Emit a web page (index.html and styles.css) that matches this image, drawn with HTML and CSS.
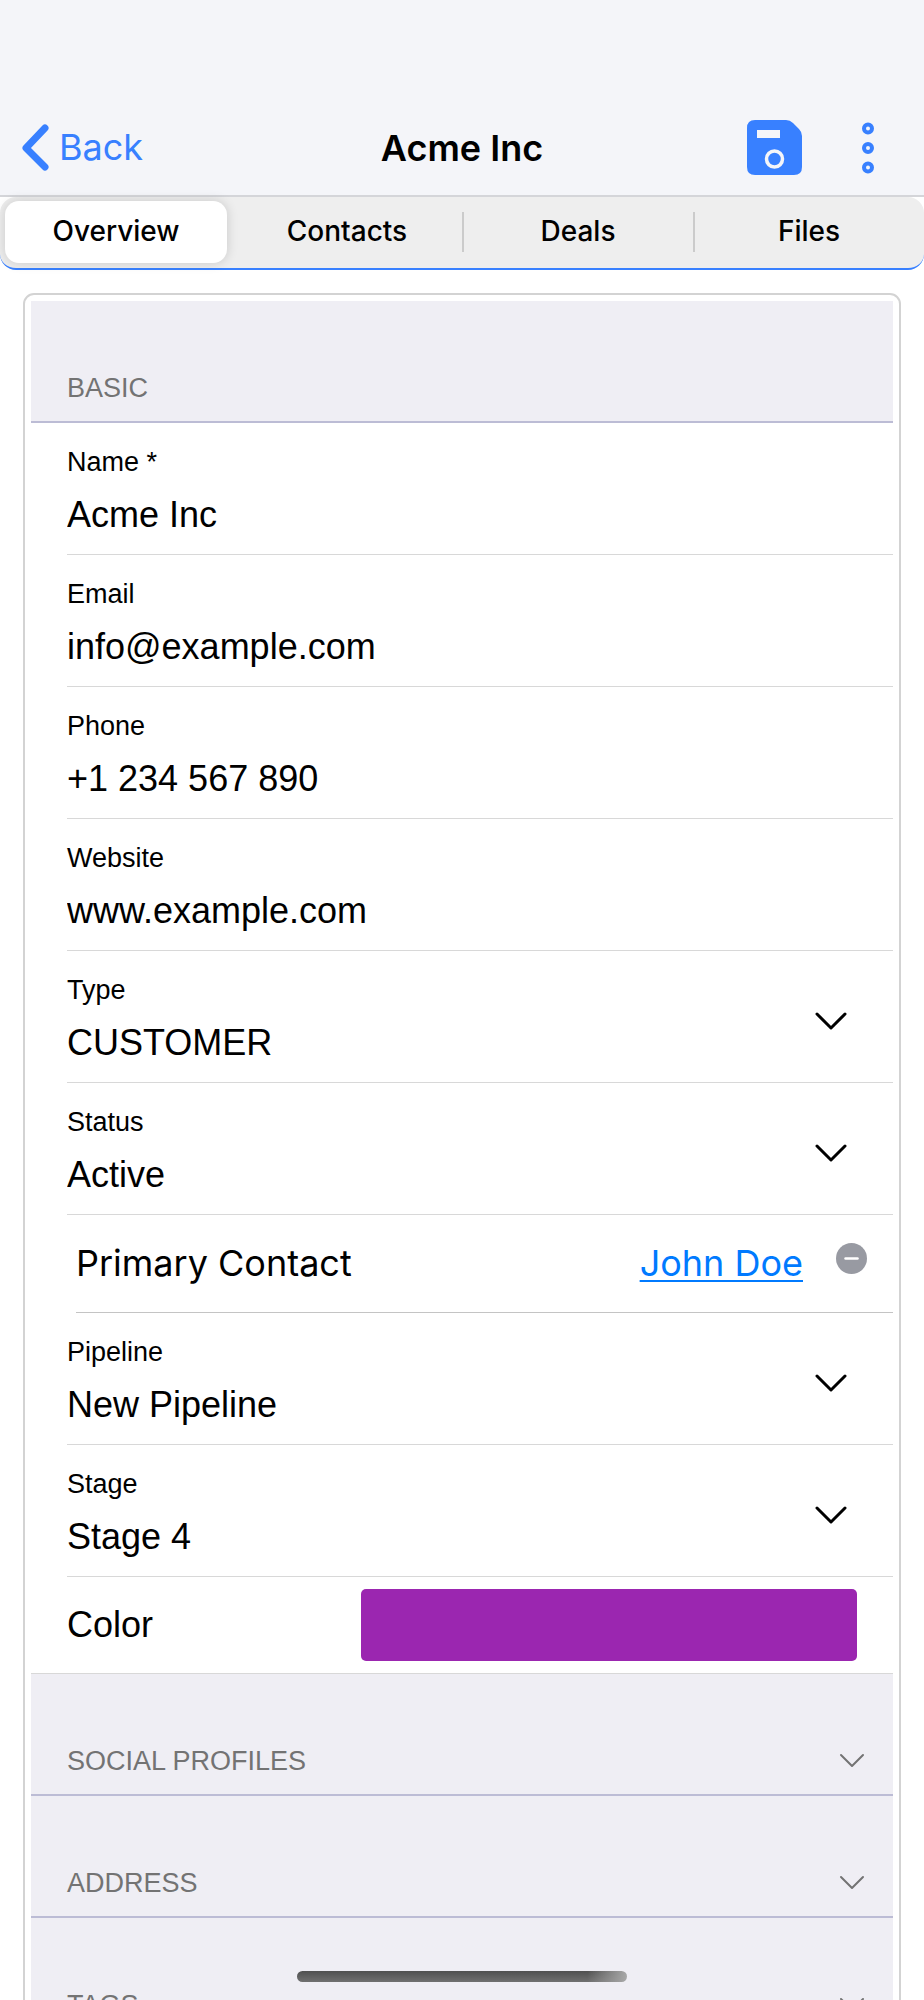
FILE: index.html
```html
<!DOCTYPE html>
<html lang="en">
<head>
  <meta charset="UTF-8" />
  <meta name="viewport" content="width=device-width, initial-scale=1.0"/>
  <title>Acme Inc</title>
  <link rel="stylesheet" href="styles.css">
</head>
<body>
  <header class="header">
    <button class="back" type="button">
      <svg width="28" height="48" viewBox="0 0 28 48"><path d="M23 4 L4 24 L23 43" fill="none" stroke="currentColor" stroke-width="7" stroke-linecap="round" stroke-linejoin="round"/></svg>
      Back
    </button>
    <h1 class="title">Acme Inc</h1>
    <div class="actions">
      <button class="icon-button" type="button" aria-label="Save">
        <svg width="55" height="55" viewBox="0 0 55 55">
          <path fill="currentColor" fill-rule="evenodd" d="M8 0 H39 Q43 0 46 3 L52 9 Q55 12 55 16 V47 Q55 55 47 55 H8 Q0 55 0 47 V8 Q0 0 8 0 Z M10 10 V18 H33 V10 Z"/>
          <circle cx="27.5" cy="39" r="8" fill="none" stroke="#f4f5f9" stroke-width="3.5"/>
        </svg>
      </button>
      <button class="icon-button" type="button" aria-label="More options">
        <svg width="12" height="52" viewBox="0 0 12 52" fill="none" stroke="currentColor" stroke-width="4">
          <circle cx="6" cy="6.5" r="4"/>
          <circle cx="6" cy="26" r="4"/>
          <circle cx="6" cy="45.5" r="4"/>
        </svg>
      </button>
    </div>
  </header>

  <nav class="tabs">
    <button class="tab active" type="button">Overview</button>
    <button class="tab" type="button">Contacts</button>
    <button class="tab divided" type="button">Deals</button>
    <button class="tab divided" type="button">Files</button>
  </nav>

  <main class="content">
    <form class="card">
      <h2 class="section">BASIC</h2>

      <div class="row">
        <div class="field">
          <label for="name">Name *</label>
          <input id="name" type="text" value="Acme Inc">
        </div>
      </div>
      <div class="row">
        <div class="field">
          <label for="email">Email</label>
          <input id="email" type="email" value="info@example.com">
        </div>
      </div>
      <div class="row">
        <div class="field">
          <label for="phone">Phone</label>
          <input id="phone" type="tel" value="+1 234 567 890">
        </div>
      </div>
      <div class="row">
        <div class="field">
          <label for="website">Website</label>
          <input id="website" type="text" value="www.example.com">
        </div>
      </div>
      <div class="row">
        <div class="field">
          <label for="type">Type</label>
          <select id="type"><option>CUSTOMER</option></select>
        </div>
        <svg class="chevron" width="32" height="28" viewBox="0 0 32 28"><path d="M2 9 L16 23 L30 9"/></svg>
      </div>
      <div class="row">
        <div class="field">
          <label for="status">Status</label>
          <select id="status"><option>Active</option></select>
        </div>
        <svg class="chevron" width="32" height="28" viewBox="0 0 32 28"><path d="M2 9 L16 23 L30 9"/></svg>
      </div>

      <div class="contact">
        <span class="contact-label">Primary Contact</span>
        <a href="#contact">John Doe</a>
        <button class="remove" type="button" aria-label="Remove contact">
          <svg width="31" height="31" viewBox="0 0 31 31"><circle cx="15.5" cy="15.5" r="15.5" fill="#989aa2"/><path d="M9.5 15.5 H21.5" stroke="#fff" stroke-width="2.5" stroke-linecap="round"/></svg>
        </button>
      </div>

      <div class="row">
        <div class="field">
          <label for="pipeline">Pipeline</label>
          <select id="pipeline"><option>New Pipeline</option></select>
        </div>
        <svg class="chevron" width="32" height="28" viewBox="0 0 32 28"><path d="M2 9 L16 23 L30 9"/></svg>
      </div>
      <div class="row">
        <div class="field">
          <label for="stage">Stage</label>
          <select id="stage"><option>Stage 4</option></select>
        </div>
        <svg class="chevron" width="32" height="28" viewBox="0 0 32 28"><path d="M2 9 L16 23 L30 9"/></svg>
      </div>
      <div class="color-row">
        <label for="color">Color</label>
        <input id="color" type="color" value="#9b26b0">
      </div>

      <button class="section" type="button">
        SOCIAL PROFILES
        <svg class="chevron small" width="26" height="30" viewBox="0 0 26 30"><path d="M2 8 L13 19 L24 8"/></svg>
      </button>
      <button class="section" type="button">
        ADDRESS
        <svg class="chevron small" width="26" height="30" viewBox="0 0 26 30"><path d="M2 8 L13 19 L24 8"/></svg>
      </button>
      <button class="section" type="button">
        TAGS
        <svg class="chevron small" width="26" height="30" viewBox="0 0 26 30"><path d="M2 8 L13 19 L24 8"/></svg>
      </button>
    </form>
  </main>

  <div class="home-indicator"></div>
</body>
</html>
```

FILE: styles.css
```css
* {
  margin: 0;
  padding: 0;
  box-sizing: border-box;
}

body {
  height: 100vh;
  display: flex;
  flex-direction: column;
  position: relative;
  overflow: hidden;
  background: #fff;
  color: #000;
  font-family: 'Liberation Sans', Arial, sans-serif;
}

button,
input,
select {
  border: none;
  background: none;
  color: inherit;
  font-family: inherit;
  appearance: none;
  outline: none;
}

/* Header */
.header {
  flex-shrink: 0;
  display: grid;
  grid-template-columns: 1fr auto 1fr;
  align-items: center;
  padding: 109px 50px 9px 22px;
  background: #f4f5f9;
  border-bottom: 2px solid #d4d5d9;
  font-family: Inter, sans-serif;
}

.back {
  display: flex;
  align-items: center;
  gap: 9px;
  color: #3880ff;
  font-size: 36px;
  line-height: 77px;
}

.title {
  padding-left: 28px;
  font-size: 36px;
  font-weight: 600;
}

.actions {
  display: flex;
  justify-content: flex-end;
  align-items: center;
  gap: 60px;
}

.icon-button {
  display: flex;
  color: #3880ff;
}

/* Tabs */
.tabs {
  flex-shrink: 0;
  display: grid;
  grid-template-columns: repeat(4, 1fr);
  padding: 4px 0 5px;
  background: #eee;
  border-bottom: 2px solid #3880ff;
  border-radius: 16px;
  font-family: Inter, sans-serif;
}

.tab {
  position: relative;
  margin: 0 4px 0 5px;
  padding-bottom: 2px;
  border-radius: 14px;
  font-size: 28px;
  font-weight: 500;
  line-height: 60px;
}

.tab.active {
  background: #fff;
  box-shadow: 0 0 12px rgba(0, 0, 0, 0.16);
}

.tab.divided::before {
  content: '';
  position: absolute;
  left: -5px;
  top: 11px;
  bottom: 11px;
  width: 2px;
  background: #cbcbcb;
}

/* Form card */
.content {
  flex: 1;
  overflow: hidden;
  padding: 23px 23px 0;
}

.card {
  padding: 6px;
  border: 2px solid #d3d3d3;
  border-radius: 11px;
}

.section {
  width: 100%;
  display: flex;
  justify-content: space-between;
  align-items: flex-end;
  padding: 71px 28px 17px 36px;
  background: #efeef4;
  border-bottom: 2px solid #bcbcd5;
  color: #737373;
  font-size: 27px;
  font-weight: normal;
  line-height: 32px;
}

.row {
  display: flex;
  align-items: center;
  margin-left: 36px;
  padding: 23px 46px 18px 0;
  border-bottom: 1px solid #d8d8d8;
}

.field {
  flex: 1;
  display: flex;
  flex-direction: column;
  gap: 16px;
}

.field label {
  font-size: 27px;
  line-height: 32px;
}

.field input,
.field select {
  width: 100%;
  height: 42px;
  font-size: 36px;
  line-height: 42px;
}

.chevron {
  fill: none;
  stroke: currentColor;
  stroke-width: 3;
  stroke-linecap: round;
  stroke-linejoin: round;
}

.chevron.small {
  stroke-width: 2;
}

.contact {
  display: flex;
  align-items: center;
  margin-left: 45px;
  padding: 24px 26px 25px 0;
  border-bottom: 1px solid #c4c4c4;
  font-family: Inter, sans-serif;
  font-size: 36px;
  line-height: 48px;
}

.contact-label {
  flex: 1;
}

.contact a {
  color: #007aff;
  text-decoration-thickness: 2px;
  text-underline-offset: 4px;
}

.remove {
  display: flex;
  margin-left: 33px;
  padding-bottom: 10px;
}

.color-row {
  display: flex;
  align-items: center;
  padding: 12px 36px;
  border-bottom: 1px solid #d8d8d8;
  font-size: 36px;
}

.color-row label {
  width: 294px;
}

.color-row input {
  flex: 1;
  height: 72px;
}

.color-row input::-webkit-color-swatch-wrapper {
  padding: 0;
}

.color-row input::-webkit-color-swatch {
  border: none;
  border-radius: 5px;
}

/* Home indicator */
.home-indicator {
  position: absolute;
  bottom: 18px;
  left: 50%;
  width: 330px;
  height: 11px;
  transform: translateX(-50%);
  border-radius: 6px;
  background: linear-gradient(90deg, transparent 88%, #a8a8a8), linear-gradient(#505050, #707070);
}
```
